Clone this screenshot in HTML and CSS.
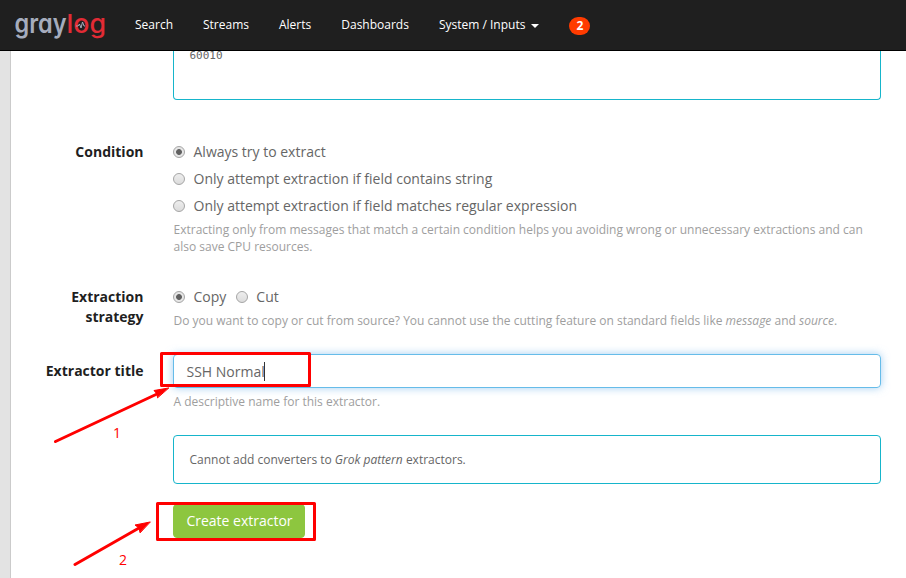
FILE: index.html
```html
<!DOCTYPE html>
<html lang="en">
<head>
<meta charset="utf-8">
<title>Graylog</title>
<link rel="stylesheet" href="styles.css">
</head>
<body>
<header class="navbar">
  <svg class="logo" width="100" height="50" viewBox="-4 0 100 50" role="img" aria-label="graylog">
    <text class="logo-gray" x="-0.500" y="32.500" textLength="52" lengthAdjust="spacingAndGlyphs">gray</text>
    <text class="logo-log" x="51.500" y="32.500" textLength="39.500" lengthAdjust="spacingAndGlyphs">log</text>
    <path class="logo-pulse" d="M61 26h2l1.500-2 1.500 4 1.500-6 1.500 4h1"/>
  </svg>
  <nav class="nav">
    <a>Search</a>
    <a>Streams</a>
    <a>Alerts</a>
    <a>Dashboards</a>
    <a>System / Inputs<span class="caret"></span></a>
    <span class="badge">2</span>
  </nav>
</header>
<main class="page">
  <div class="row row-example">
    <div class="label"></div>
    <div class="field"><pre class="well example">60010</pre></div>
  </div>
  <div class="row row-condition">
    <div class="label">Condition</div>
    <div class="field">
      <div class="option"><i class="radio on"></i><span>Always try to extract</span></div>
      <div class="option"><i class="radio"></i><span>Only attempt extraction if field contains string</span></div>
      <div class="option"><i class="radio"></i><span>Only attempt extraction if field matches regular expression</span></div>
      <p class="help">Extracting only from messages that match a certain condition helps you avoiding wrong or unnecessary extractions and can<br>also save CPU resources.</p>
    </div>
  </div>
  <div class="row row-strategy">
    <div class="label">Extraction<br>strategy</div>
    <div class="field">
      <div class="inline"><i class="radio on"></i><span class="copy">Copy</span><i class="radio"></i><span>Cut</span></div>
      <p class="help">Do you want to copy or cut from source? You cannot use the cutting feature on standard fields like <em>message</em> and <em>source</em>.</p>
    </div>
  </div>
  <div class="row row-title">
    <div class="label">Extractor title</div>
    <div class="field">
      <div class="input"><span>SSH Normal</span><i class="cursor"></i></div>
      <p class="help">A descriptive name for this extractor.</p>
    </div>
  </div>
  <div class="row row-converters">
    <div class="label"></div>
    <div class="field"><div class="well converters"><span>Cannot add converters to <em>Grok pattern</em> extractors.</span></div></div>
  </div>
  <div class="row row-submit">
    <div class="label"></div>
    <div class="field"><button class="button">Create extractor</button></div>
  </div>
</main>
<svg class="annotations" width="906" height="578" viewBox="0 0 906 578">
  <rect x="161.5" y="353.5" width="148" height="32"/>
  <rect x="157.5" y="503.5" width="157" height="36"/>
  <path d="M55.500 441.500L157 394M75 564.500L139 528"/>
  <path class="head" d="M168.500 388L154 390.500 157 394 157.500 397.500ZM150 522L135 525 139 528 140 532.500Z"/>
  <text x="113" y="438">1</text>
  <text x="119" y="565">2</text>
</svg>
</body>
</html>
```
FILE: styles.css
```css
* { box-sizing: border-box; }
body {
  margin: 0;
  height: 578px;
  overflow: hidden;
  background: #e3e3e3;
  font: 14px/20px "Open Sans", "Noto Sans", sans-serif;
  color: #666;
}
.navbar {
  display: flex;
  height: 51px;
  padding-left: 11px;
  background: #1f1f1f;
  border-bottom: 1px solid #000;
}
.logo { flex: none; }
.logo text { font-family: Inter, sans-serif; font-size: 26px; font-feature-settings: "cv11" 1; }
.logo-gray { fill: #a5acbd; font-weight: 600; }
.logo-log { fill: #e22b35; font-weight: 500; }
.logo-pulse { fill: none; stroke: #a5acbd; stroke-width: 1; }
.nav {
  display: flex;
  align-items: flex-start;
  gap: 30px;
  padding: 15px 0 0 24px;
  color: #fff;
  font-size: 12px;
  white-space: nowrap;
}
.caret {
  display: inline-block;
  margin-left: 6px;
  border: 4px solid transparent;
  border-top-color: #fff;
  border-bottom: 0;
  vertical-align: middle;
}
.badge {
  width: 21px;
  height: 18px;
  margin-top: 2px;
  border-radius: 9px;
  background: #ff3b00;
  font-weight: 700;
  line-height: 17px;
  text-align: center;
}
.page {
  height: 527px;
  margin-left: 10px;
  border-left: 1px solid #cbcbcb;
  background: #fff;
}
.row { display: flex; gap: 29.5px; }
.label { width: 132.5px; flex: none; text-align: right; font-weight: 700; color: #1f1f1f; }
.field { width: 708px; flex: none; white-space: nowrap; }
.row-example { height: 91px; }
.row-condition { height: 145px; }
.row-strategy { height: 67px; }
.row-title { height: 81px; }
.row-title .label { padding-top: 7px; }
.row-converters { height: 69px; }
.well { border: 1px solid #16b5cb; border-radius: 4px; }
.example {
  height: 49px;
  margin: 0;
  padding: 1px 15.5px 0;
  border-top: 0;
  border-radius: 0 0 4px 4px;
  font: 11px/8px "DejaVu Sans Mono", monospace;
}
.option { display: flex; align-items: center; height: 20px; margin-bottom: 7px; }
.inline { display: flex; align-items: center; height: 20px; }
.radio {
  width: 12px;
  height: 12px;
  flex: none;
  margin-right: 8.5px;
  border: 1px solid #a5a5a5;
  border-radius: 50%;
  background: linear-gradient(#eee, #dcdcdc);
}
.radio.on { background: radial-gradient(circle, #606060 0 2.5px, #e6e6e6 3.3px); }
.copy { margin-right: 9.5px; }
.help { margin: 0; padding-left: .5px; font-size: 12px; line-height: 17px; color: #9e9e9e; }
.row-condition .help { margin-top: -2px; }
.row-strategy .help { margin-top: 5px; }
.row-title .help { margin-top: 5px; }
.input {
  display: flex;
  align-items: center;
  height: 34px;
  padding: 1px 0 0 12.5px;
  border: 1px solid #66bce9;
  border-radius: 4px;
  box-shadow: 0 0 8px rgba(102, 175, 233, .6);
}
.cursor { width: 1px; height: 19px; margin-left: -.5px; background: #333; }
.converters { display: flex; align-items: center; height: 49px; padding-left: 15.5px; font-size: 12px; }
.button {
  width: 132px;
  height: 34px;
  padding: 0 0 0 1px;
  border: 1px solid #8dc63f;
  border-radius: 4px;
  background: #8dc63f;
  color: #fff;
  font: inherit;
}
.annotations { position: absolute; left: 0; top: 0; fill: none; stroke: #f00; stroke-width: 3; stroke-linecap: round; stroke-linejoin: round; }
.annotations .head { fill: #f00; stroke-width: 1; }
.annotations text { fill: #f00; stroke: none; font-size: 14px; }
```
